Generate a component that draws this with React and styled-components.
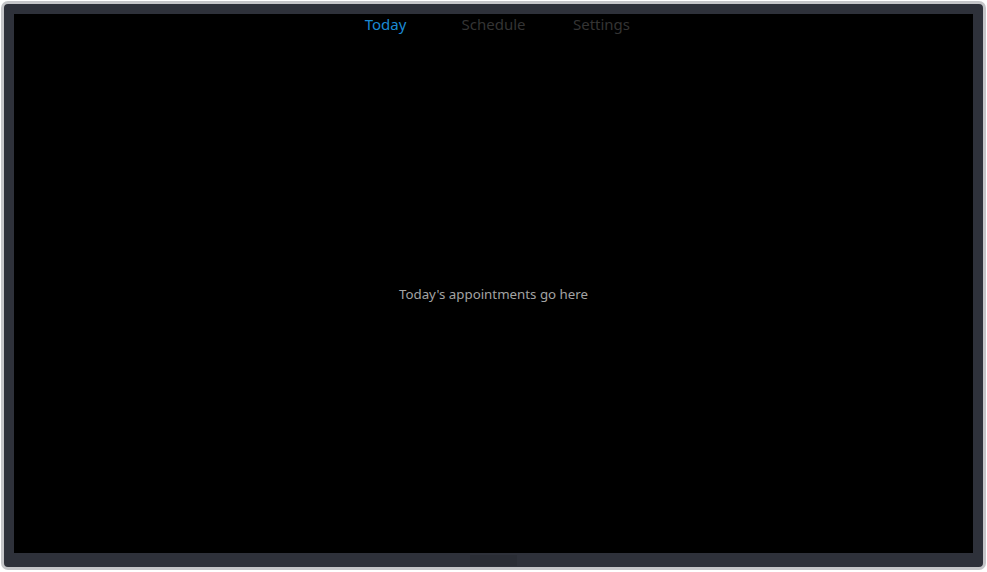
import React, { useState } from 'react'
import styled, { createGlobalStyle } from 'styled-components'

const Global = createGlobalStyle`
    html, body {
        margin: 0;
        padding: 0;
        background: #ffffff;
    }
    body {
        font-family: "Noto Sans", "Open Sans", sans-serif;
    }
`

const Page = styled.div`
    box-sizing: border-box;
    width: 987px;
    height: 572px;
    padding: 1px 1px 2px 1px;
`

const Device = styled.div`
    box-sizing: border-box;
    height: 100%;
    display: flex;
    flex-direction: column;
    background: #2e313a;
    border: 3px solid #c4c5c8;
    border-radius: 7px;
    padding: 10px 10px 0 10px;
`

const Screen = styled.div`
    flex: 1;
    display: flex;
    flex-direction: column;
    background: #000;
`

const HomeBar = styled.div`
    height: 14px;
    display: flex;
    justify-content: center;
    align-items: center;
`

const HomeButton = styled.div`
    width: 47px;
    height: 11px;
    background: #2a2d35;
`

const Tabs = styled.nav`
    display: flex;
    justify-content: center;
    height: 20px;
`

const Tab = styled.button`
    width: 108px;
    padding: 0;
    border: none;
    background: none;
    font-family: inherit;
    font-size: 15px;
    line-height: 20px;
    color: ${p => (p.$active ? '#1b8ad3' : '#343434')};
    cursor: pointer;
`

const Content = styled.div`
    flex: 1;
    display: flex;
    align-items: center;
    justify-content: center;
    color: #a3a3a3;
    font-size: 13.3px;
`

const tabs = ['Today', 'Schedule', 'Settings']

const App = () => {
    const [active, setActive] = useState('Today')
    return (
        <>
            <Global />
            <Page>
                <Device>
                    <Screen>
                        <Tabs>
                            {tabs.map(t => (
                                <Tab key={t} $active={t === active} onClick={() => setActive(t)}>
                                    {t}
                                </Tab>
                            ))}
                        </Tabs>
                        <Content>Today's appointments go here</Content>
                    </Screen>
                    <HomeBar>
                        <HomeButton />
                    </HomeBar>
                </Device>
            </Page>
        </>
    )
}

export default App
